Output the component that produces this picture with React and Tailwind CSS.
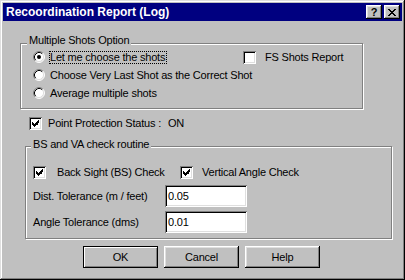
import React from "react";

const raised =
  "shadow-[inset_-1px_-1px_0_#000,inset_1px_1px_0_#fff,inset_-2px_-2px_0_#808080,inset_2px_2px_0_#dfdfdf]";
const sunken =
  "shadow-[inset_1px_1px_0_#808080,inset_-1px_-1px_0_#fff,inset_2px_2px_0_#000,inset_-2px_-2px_0_#dfdfdf]";

function Check() {
  return (
    <svg width="7" height="7" viewBox="0 0 7 7" shapeRendering="crispEdges">
      <path
        fill="#000"
        d="M6 0h1v3h-1zM5 1h1v4h-1zM4 2h1v3h-1zM0 2h1v3h-1zM1 3h1v3h-1zM2 4h1v3h-1zM3 3h1v3h-1z"
      />
    </svg>
  );
}

function Checkbox({ checked }) {
  return (
    <div className={`w-[13px] h-[13px] shrink-0 bg-white flex items-center justify-center ${sunken}`}>
      {checked ? <Check /> : null}
    </div>
  );
}

function Radio({ checked }) {
  return (
    <svg width="12" height="12" viewBox="0 0 12 12" className="shrink-0">
      <circle cx="6" cy="6" r="5" fill="#fff" />
      <path d="M2.11 9.89A5.5 5.5 0 0 1 9.89 2.11" fill="none" stroke="#808080" strokeWidth="1" />
      <path d="M9.89 2.11A5.5 5.5 0 0 1 2.11 9.89" fill="none" stroke="#fff" strokeWidth="1" />
      <path d="M2.82 9.18A4.5 4.5 0 0 1 9.18 2.82" fill="none" stroke="#000" strokeWidth="1" />
      <path d="M9.18 2.82A4.5 4.5 0 0 1 2.82 9.18" fill="none" stroke="#dfdfdf" strokeWidth="1" />
      {checked ? <circle cx="6" cy="6" r="2" fill="#000" /> : null}
    </svg>
  );
}

function Edit({ value }) {
  return (
    <div className={`w-[82px] h-[22px] bg-white pl-[3px] flex items-center leading-none ${sunken}`}>
      {value}
    </div>
  );
}

function Button({ children, isDefault }) {
  return isDefault ? (
    <div className="w-[75px] h-[22px] border border-black flex items-center justify-center shadow-[inset_1px_1px_0_#fff,inset_-1px_-1px_0_#808080]">
      {children}
    </div>
  ) : (
    <div className={`w-[75px] h-[22px] flex items-center justify-center ${raised}`}>{children}</div>
  );
}

export default function App() {
  return (
    <div
      className={`w-[405px] h-[280px] bg-[#c0c0c0] p-[3px] flex flex-col text-[11px] tracking-[-0.2px] text-black font-['Liberation_Sans',Arial,sans-serif] shadow-[inset_-1px_-1px_0_#000,inset_1px_1px_0_#dfdfdf,inset_-2px_-2px_0_#808080,inset_2px_2px_0_#fff]`}
    >
      {/* Title bar */}
      <div className="h-[18px] shrink-0 bg-[#000080] flex items-center pl-[3px] pr-[2px]">
        <span className="text-white font-bold text-[12px] tracking-normal leading-none">Recoordination Report (Log)</span>
        <div className="ml-auto flex gap-[2px]">
          <div className={`w-[16px] h-[14px] bg-[#c0c0c0] flex items-center justify-center font-bold text-[11px] leading-none ${raised}`}>
            ?
          </div>
          <div className={`w-[16px] h-[14px] bg-[#c0c0c0] flex items-center justify-center ${raised}`}>
            <svg width="8" height="7" viewBox="0 0 8 7" shapeRendering="crispEdges">
              <path
                fill="#000"
                d="M0 0h2v1h-2zM6 0h2v1h-2zM1 1h2v1h-2zM5 1h2v1h-2zM2 2h4v1h-4zM3 3h2v1h-2zM2 4h4v1h-4zM1 5h2v1h-2zM5 5h2v1h-2zM0 6h2v1h-2zM6 6h2v1h-2z"
              />
            </svg>
          </div>
        </div>
      </div>

      {/* Group 1 */}
      <div className="mt-[22px] ml-[17px] w-[343px] h-[66px] shrink-0 relative border border-[#808080] shadow-[inset_1px_1px_0_#fff,1px_1px_0_#fff] pt-[4px] pl-[12px] flex flex-col">
        <span className="absolute left-[6px] top-[-10px] px-[2px] bg-[#c0c0c0] leading-[13px]">
          Multiple Shots Option
        </span>
        <div className="h-[18px] flex items-center">
          <div className="w-[210px] flex items-center">
            <Radio checked />
            <span className="ml-[4px] border border-dotted border-black leading-[11px] pr-[1px]">
              Let me choose the shots
            </span>
          </div>
          <Checkbox />
          <span className="ml-[9px]">FS Shots Report</span>
        </div>
        <div className="h-[18px] flex items-center">
          <Radio />
          <span className="ml-[5px]">Choose Very Last Shot as the Correct Shot</span>
        </div>
        <div className="h-[18px] flex items-center">
          <Radio />
          <span className="ml-[5px]">Average multiple shots</span>
        </div>
      </div>

      {/* Point protection */}
      <div className="mt-[8px] ml-[26px] h-[13px] shrink-0 flex items-center">
        <Checkbox checked />
        <span className="ml-[6px] w-[120px] whitespace-nowrap">Point Protection Status :</span>
        <span>ON</span>
      </div>

      {/* Group 2 */}
      <div className="mt-[16px] ml-[22px] w-[367px] h-[93px] shrink-0 relative border border-[#808080] shadow-[inset_1px_1px_0_#fff,1px_1px_0_#fff] pt-[19px] pl-[7px] flex flex-col">
        <span className="absolute left-[5px] top-[-9px] px-[2px] bg-[#c0c0c0] leading-[13px]">
          BS and VA check routine
        </span>
        <div className="h-[13px] flex items-center">
          <div className="w-[147px] flex items-center">
            <Checkbox checked />
            <span className="ml-[11px]">Back Sight (BS) Check</span>
          </div>
          <Checkbox checked />
          <span className="ml-[9px]">Vertical Angle Check</span>
        </div>
        <div className="mt-[6px] h-[22px] flex items-center">
          <span className="w-[132px]">Dist. Tolerance (m / feet)</span>
          <Edit value="0.05" />
        </div>
        <div className="mt-[4px] h-[22px] flex items-center">
          <span className="w-[132px]">Angle Tolerance (dms)</span>
          <Edit value="0.01" />
        </div>
      </div>

      {/* Buttons */}
      <div className="mt-[7px] ml-[80px] flex gap-[6px]">
        <Button isDefault>OK</Button>
        <Button>Cancel</Button>
        <Button>Help</Button>
      </div>
    </div>
  );
}
